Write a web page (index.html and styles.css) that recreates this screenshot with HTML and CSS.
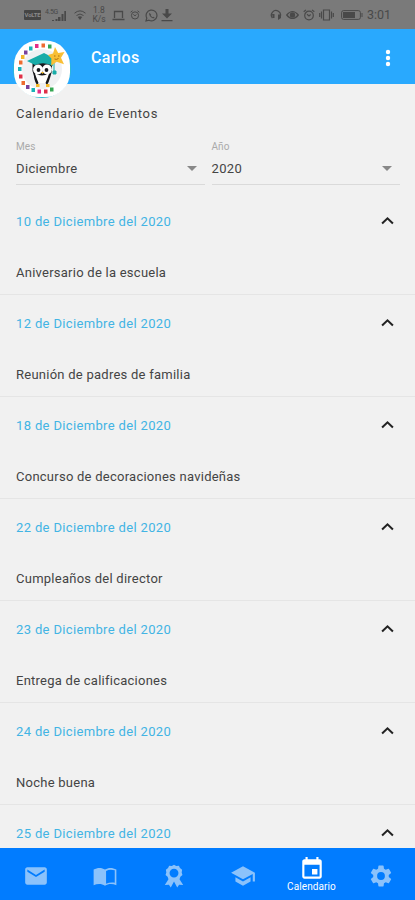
FILE: index.html
```html
<!DOCTYPE html>
<html lang="es">
<head>
<meta charset="utf-8">
<title>Calendario de Eventos</title>
<link rel="stylesheet" href="styles.css">
</head>
<body>
<svg class="defs" aria-hidden="true">
  <symbol id="chevron" viewBox="0 0 12 8"><path d="M1 6.700 6 2l5 4.700" fill="none" stroke="currentColor" stroke-width="1.900"/></symbol>
  <symbol id="alarm" viewBox="0 0 12 12"><circle cx="6" cy="6.500" r="4.300" fill="none" stroke="currentColor" stroke-width="1.200"/><path d="M.7 2.700 3 .9M11.300 2.700 9 .9M4 5.300l2 1.700 1.700-1.500" fill="none" stroke="currentColor" stroke-width="1.200"/></symbol>
</svg>
<div class="app">
  <div class="status">
    <div class="status-left">
      <span class="volte">VoLTE</span>
      <span class="signal"><span class="gen">4.5G</span><svg width="15" height="10" viewBox="0 0 15 10"><path d="M1 9h2v1H1zM4.500 8h2v2h-2zM7 6h2.500v4H7zM10.500 3h2v7h-2zM13.300 0H15v10h-1.700z" fill="currentColor"/></svg></span>
      <svg class="wifi" width="12" height="12" viewBox="0 0 12 12"><path d="M.5 4.200Q6-.5 11.500 4.200M2.500 6.500Q6 3.500 9.500 6.500" fill="none" stroke="currentColor" stroke-width="1"/><path d="M3.800 8Q6 6.400 8.200 8L6 11z" fill="currentColor"/></svg>
      <span class="rate"><span>1.8</span><span>K/s</span></span>
      <svg class="laptop" width="13" height="11" viewBox="0 0 13 11"><path d="M2.500 8V1.500h8V8M.5 9.500h12" fill="none" stroke="currentColor" stroke-width="1.300"/></svg>
      <svg class="clock" width="10" height="10"><use href="#alarm"/></svg>
      <svg class="chat" width="13" height="13" viewBox="0 0 13 13"><path d="M1 12l.8-3A5.400 5.400 0 1 1 4 11.200z" fill="none" stroke="currentColor" stroke-width="1.200"/><path d="M4.500 3.700c-1 1 0 3 1.300 4.200s3 2 3.900.8l-1.500-1-.8.600-1.700-1.800.5-.8z" fill="currentColor"/></svg>
      <svg class="download" width="12" height="13" viewBox="0 0 12 13"><path d="M4.500 0h3v4.500H11L6 9.500 1 4.500h3.500zM.5 11h11v1.200H.5z" fill="currentColor"/></svg>
    </div>
    <div class="status-right">
      <svg width="12" height="12" viewBox="0 0 12 12"><path d="M2.500 9A4.500 4.500 0 1 1 10 8" fill="none" stroke="currentColor" stroke-width="1.300"/><path d="M2 5h2.500v4H3zM8 5.500h3V9L8 11z" fill="currentColor"/></svg>
      <svg width="13" height="12" viewBox="0 0 13 12"><path d="M.7 6Q6.500-1 12.300 6 6.500 13 .7 6z" fill="none" stroke="currentColor" stroke-width="1.200"/><circle cx="6.500" cy="6" r="2.700" fill="currentColor"/></svg>
      <svg width="12" height="12"><use href="#alarm"/></svg>
      <svg width="15" height="12" viewBox="0 0 15 12"><path d="M4.500 1h6v10h-6zM2.500 2.500v7M12.500 2.500v7M.7 4v4M14.300 4v4" fill="none" stroke="currentColor" stroke-width="1.200"/></svg>
      <span class="battery"><svg width="22" height="10" viewBox="0 0 22 10"><rect x=".6" y=".6" width="18.800" height="8.800" rx="2" fill="none" stroke="currentColor"/><rect x="2" y="2" width="12" height="6" fill="currentColor"/><path d="M20.500 3h1v4h-1z" fill="currentColor"/></svg></span>
      <span class="time">3:01</span>
    </div>
  </div>

  <header class="bar">
    <svg class="avatar" viewBox="0 0 60 60">
      <circle cx="30" cy="30" r="29" fill="#2ebbd0"/>
      <rect x="2" y="1.500" width="56" height="56.500" rx="24.500" fill="#fff"/>
      <circle cx="30" cy="30" r="20" fill="#f0f1f3"/>
      <g>
        <path fill="#35a853" d="M36 5.500h3.500v4H36zM38 48.500h3.500v4H38z"/>
        <path fill="#ee6b2f" d="M29.500 4.500H33v4h-3.500zM7 21.500h3.500v4H7zM9.500 42H13v4H9.500z"/>
        <path fill="#e52d86" d="M23 5h3.500v4H23zM25.500 50.500H29v4h-3.500z"/>
        <path fill="#19b2b8" d="M17 7.500h3.500v4H17zM6 28h3.500v4H6zM19.500 49H23v4h-3.500z"/>
        <path fill="#78409c" d="M12 11.500h3.500v4H12zM14 46h3.500v4H14z"/>
        <path fill="#f2b62b" d="M9 16h3.500v4H9z"/>
        <path fill="#df3048" d="M7 35.500h3.500v4H7zM32 50.500h3.500v4H32z"/>
      </g>
      <path d="M20.500 22 23 24h13l4-2v10l-2 7q-8 7-15.500 0l-2-7z" fill="#16171b"/>
      <path d="M23 34q7 5 14 0l-1 10H24z" fill="#fff"/>
      <path d="m22.500 34 4 10-1.500 2q-4-6-2.500-12zM37.500 34l-4 10 1.500 2q4-6 2.500-12z" fill="#16171b"/>
      <circle cx="26" cy="30.500" r="4.900" fill="#fff"/><circle cx="35" cy="30.500" r="4.900" fill="#fff"/>
      <circle cx="26.500" cy="31" r="1.900" fill="#16171b"/><circle cx="34.500" cy="31" r="1.900" fill="#16171b"/>
      <path d="m29 33 1.500 2 1.500-2zM24 45h3.500v3H24zM34 45h3.500v3H34z" fill="#f5b928"/>
      <path d="m15 22 17-8 14 7-5 3.500V27q-9-5-18-1z" fill="#19aca8"/>
      <path d="M42 21v12M41 32h3v3h-3z" fill="#19aca8" stroke="#19aca8"/>
      <path d="m43 8 3.200 6 6.300-1-3.500 5.700 3 6.500-7.300-2.500-5.500 4 .2-7.200L36 16l5-1.500z" fill="#f9bf35"/>
      <path d="M42 17h1.500M46 17h1.500M42.500 20q2 1 4-.5" fill="none" stroke="#a86d14"/>
    </svg>
    <h1 class="name">Carlos</h1>
    <svg class="more" width="6" height="18" viewBox="0 0 6 18"><g fill="#fff"><circle cx="3" cy="3" r="2.200"/><circle cx="3" cy="9" r="2.200"/><circle cx="3" cy="15" r="2.200"/></g></svg>
  </header>

  <main class="content">
    <h2 class="title">Calendario de Eventos</h2>
    <div class="filters">
      <div class="field"><span class="label">Mes</span><div class="select"><span>Diciembre</span><i class="caret"></i></div></div>
      <div class="field"><span class="label">Año</span><div class="select"><span>2020</span><i class="caret"></i></div></div>
    </div>
    <section class="event"><div class="date"><span>10 de Diciembre del 2020</span><svg class="chev"><use href="#chevron"/></svg></div><p>Aniversario de la escuela</p></section>
    <section class="event"><div class="date"><span>12 de Diciembre del 2020</span><svg class="chev"><use href="#chevron"/></svg></div><p>Reunión de padres de familia</p></section>
    <section class="event"><div class="date"><span>18 de Diciembre del 2020</span><svg class="chev"><use href="#chevron"/></svg></div><p>Concurso de decoraciones navideñas</p></section>
    <section class="event"><div class="date"><span>22 de Diciembre del 2020</span><svg class="chev"><use href="#chevron"/></svg></div><p>Cumpleaños del director</p></section>
    <section class="event"><div class="date"><span>23 de Diciembre del 2020</span><svg class="chev"><use href="#chevron"/></svg></div><p>Entrega de calificaciones</p></section>
    <section class="event"><div class="date"><span>24 de Diciembre del 2020</span><svg class="chev"><use href="#chevron"/></svg></div><p>Noche buena</p></section>
    <section class="event"><div class="date"><span>25 de Diciembre del 2020</span><svg class="chev"><use href="#chevron"/></svg></div></section>
  </main>

  <nav class="tabs">
    <a class="tab"><svg viewBox="0 0 24 24"><path d="M20 4H4c-1.100 0-2 .9-2 2v12c0 1.100.9 2 2 2h16c1.100 0 2-.9 2-2V6c0-1.100-.9-2-2-2zm0 4-8 5-8-5V6l8 5 8-5z"/></svg></a>
    <a class="tab"><svg viewBox="0 0 24 24"><path fill-rule="evenodd" d="M1.500 6C5 4 9 4 12 6c3-2 7-2 10.500 0v14.500c-3.500-1.500-7.500-1.500-10.500.5-3-2-7-2-10.500-.5zM13 7.300v11.900c2.500-1.200 5-1.500 8-1V6.800c-3-1-5.500-.8-8 .5z"/></svg></a>
    <a class="tab"><svg viewBox="0 0 24 24"><path fill-rule="evenodd" d="m12 1.500 2 1.200 2.500-.2 1 2.200 2 1.500-.4 2.500.7 2.300-1.900 1.700-.8 2.200 3.400 5.500-3.800-.3-1.700 2.600-3-5.600-3 5.600-1.700-2.600-3.800.3 3.400-5.500-.8-2.200L4.200 11l.7-2.300-.4-2.500 2-1.500 1-2.200 2.500.2zm0 3.700a4.100 4.100 0 1 0 0 8.200 4.100 4.100 0 0 0 0-8.200z"/></svg></a>
    <a class="tab"><svg viewBox="0 0 24 24"><path d="M5 13.180v4L12 21l7-3.820v-4L12 17zM12 3 1 9l11 6 9-4.910V17h2V9z"/></svg></a>
    <a class="tab active"><svg viewBox="0 0 24 24"><path d="M17 12h-5v5h5zM16 1v2H8V1H6v2H5c-1.110 0-1.990.9-1.990 2L3 19c0 1.100.89 2 2 2h14c1.100 0 2-.9 2-2V5c0-1.100-.9-2-2-2h-1V1zm3 18H5V8h14z"/></svg><span>Calendario</span></a>
    <a class="tab"><svg viewBox="0 0 24 24"><path d="M19.140 12.940c.04-.3.060-.61.060-.94s-.02-.64-.07-.94l2.030-1.580a.49.490 0 0 0 .12-.61l-1.920-3.320a.49.490 0 0 0-.59-.22l-2.390.96a7 7 0 0 0-1.620-.94l-.36-2.540A.48.480 0 0 0 13.920 2.400h-3.840a.48.480 0 0 0-.48.410l-.36 2.540c-.59.240-1.130.57-1.620.94l-2.390-.96a.49.490 0 0 0-.59.220L2.720 8.870a.48.480 0 0 0 .12.610l2.030 1.580a6 6 0 0 0 0 1.880l-2.030 1.580a.49.490 0 0 0-.12.610l1.920 3.320c.12.220.37.290.59.220l2.390-.96c.5.380 1.030.7 1.620.94l.36 2.540c.05.240.24.410.48.410h3.840c.24 0 .44-.17.480-.41l.36-2.540a7 7 0 0 0 1.620-.94l2.390.96c.22.080.47 0 .59-.22l1.920-3.320a.48.480 0 0 0-.12-.61zM12 15.600a3.600 3.600 0 1 1 0-7.200 3.600 3.600 0 0 1 0 7.200z"/></svg></a>
  </nav>
</div>
</body>
</html>
```
FILE: styles.css
```css
* { box-sizing: border-box; }
body { margin: 0; font-family: Roboto, "Liberation Sans", sans-serif; background: #f1f1f1; }
h1, h2, p { margin: 0; font-weight: 400; }
svg { display: block; flex: none; }
.defs { position: absolute; width: 0; height: 0; }
.app { width: 415px; height: 900px; display: flex; flex-direction: column; overflow: hidden; }

.status { height: 29px; flex: none; display: flex; justify-content: space-between; align-items: center; padding: 1px 24px 0 24px; background: #7a7a7a; color: #494949; }
.status-left, .status-right { display: flex; align-items: center; }
.status-right { gap: 4px; }
.volte { width: 17px; height: 10px; border-radius: 1px; background: #454545; color: #8a8a8a; font-size: 6px; line-height: 10px; text-align: center; font-weight: 700; letter-spacing: -.2px; }
.signal { display: flex; align-items: flex-end; width: 21px; height: 12px; margin-left: 4px; }
.gen { font-size: 7px; line-height: 7px; align-self: flex-start; width: 6px; white-space: nowrap; letter-spacing: -.4px; }
.wifi { margin-left: 8px; }
.rate { display: flex; flex-direction: column; align-items: center; width: 14px; margin-left: 6px; font-size: 8.500px; line-height: 9px; }
.laptop { margin-left: 6px; }
.clock { margin-left: 5px; }
.chat { margin-left: 5px; }
.download { margin-left: 3px; }
.battery { margin-left: 3px; }
.time { font-size: 12.500px; line-height: 14px; width: 24px; white-space: nowrap; }

.bar { position: relative; height: 55px; flex: none; display: flex; align-items: center; justify-content: space-between; padding: 3px 24px 0 91px; background: #29a9fe; }
.avatar { position: absolute; left: 12px; top: 10px; width: 60px; height: 60px; }
.name { color: #fff; font-size: 16px; line-height: 20px; font-weight: 500; letter-spacing: .4px; }

.content { flex: 1; min-height: 0; overflow: hidden; color: #444; }
.title { padding: 21px 16px 0; font-size: 13px; line-height: 18px; letter-spacing: .64px; }
.filters { display: flex; gap: 7px; padding: 17px 15px 0 16px; }
.field { flex: 1; height: 45px; border-bottom: 1px solid #dadada; }
.label { display: block; font-size: 10px; line-height: 14px; color: #aaa; letter-spacing: .1px; }
.select { display: flex; align-items: center; justify-content: space-between; padding: 6px 8px 0 0; font-size: 13px; line-height: 18px; letter-spacing: .35px; }
.caret { margin-top: -2px; border: 5px solid transparent; border-top-color: #888; border-bottom: 0; }

.event { height: 102px; padding: 20px 21px 0 16px; border-bottom: 1px solid #e5e5e5; }
.filters + .event { height: 110px; padding-top: 28px; }
.date { display: flex; align-items: center; justify-content: space-between; color: #42b4e4; font-size: 13px; line-height: 18px; letter-spacing: .35px; }
.chev { width: 13px; height: 9px; color: #222; margin-top: -3px; }
.event p { padding-top: 33px; font-size: 13px; line-height: 18px; letter-spacing: .25px; white-space: nowrap; }

.tabs { height: 52px; flex: none; display: grid; grid-template-columns: repeat(6, 1fr); padding: 0 0 0 1px; background: #017cff; }
.tab { display: flex; flex-direction: column; align-items: center; justify-content: center; padding-top: 3px; color: #8bc2fb; }
.tab svg { width: 26px; height: 26px; fill: currentColor; }
.active { color: #fff; justify-content: flex-start; padding-top: 8px; }
.active span { font-size: 10px; line-height: 12px; letter-spacing: .1px; margin-top: -1px; }
```
